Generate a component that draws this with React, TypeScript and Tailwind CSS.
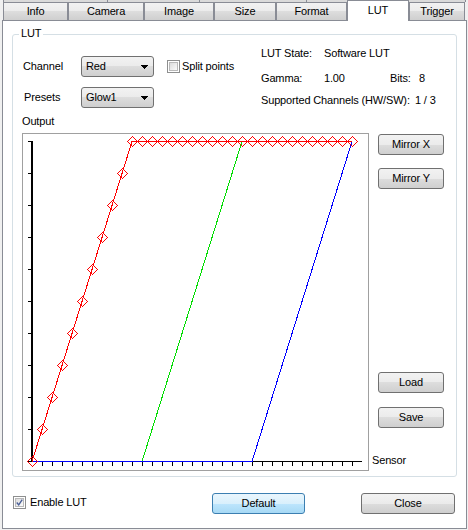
import React from 'react';

const tabs = [
  { label: 'Info', width: 'w-[65px]' },
  { label: 'Camera', width: 'w-[76px]' },
  { label: 'Image', width: 'w-[70px]' },
  { label: 'Size', width: 'w-[62px]' },
  { label: 'Format', width: 'w-[71px]' },
  { label: 'LUT', width: 'w-[62px]', active: true },
  { label: 'Trigger', width: 'w-[56px]' },
];

const btnFace =
  'border border-[#707070] rounded-[3px] bg-[linear-gradient(#f2f2f2,#ebebeb_50%,#dddddd_50%,#cfcfcf)]';

function WinButton({ label, width = 'w-[66px]', isDefault = false }: { label: string; width?: string; isDefault?: boolean }) {
  return (
    <button
      type="button"
      className={
        isDefault
          ? `${width} h-[21px] shrink-0 border border-[#3c7fb1] rounded-[3px] bg-[linear-gradient(#eaf6fd,#d9f0fc_50%,#bee6fd_50%,#a7d9f5)] text-black leading-[13px]`
          : `${width} h-[21px] shrink-0 ${btnFace} text-black leading-[13px]`
      }
    >
      {label}
    </button>
  );
}

function ComboBox({ value }: { value: string }) {
  return (
    <div className={`w-[73px] h-[21px] shrink-0 flex items-center justify-between pl-[4px] pr-[5px] ${btnFace}`}>
      <span className="leading-[13px]">{value}</span>
      <svg width="7" height="4" viewBox="0 0 7 4" shapeRendering="crispEdges">
        <polygon points="0,0 7,0 3.5,4" fill="#000" />
      </svg>
    </div>
  );
}

function CheckBox({ checked = false }: { checked?: boolean }) {
  return (
    <div className="w-[13px] h-[13px] shrink-0 border border-[#8e8f8f] bg-white p-px">
      <div className="w-full h-full border border-[#b9b9b9] bg-[linear-gradient(135deg,#dcdcdc,#fbfbfb)] flex items-center justify-center">
        {checked && (
          <svg width="9" height="9" viewBox="0 0 9 9">
            <path d="M1 4.5 L3.5 7.5 L8 0.8" fill="none" stroke="#4a5f97" strokeWidth="1.8" />
          </svg>
        )}
      </div>
    </div>
  );
}

function LutChart() {
  const yTicks = Array.from({ length: 11 }, (_, i) => 141 + i * 32);
  const xTicks = Array.from({ length: 32 }, (_, i) => 42 + i * 10);
  const points = Array.from({ length: 33 }, (_, i) => ({
    x: 32 + i * 10,
    y: i <= 10 ? 461 - i * 32 : 141,
  }));

  return (
    <svg width={345} height={336} viewBox="23 134 345 336" shapeRendering="crispEdges">
      {yTicks.map((y) => (
        <line key={y} x1={28} x2={32} y1={y + 0.5} y2={y + 0.5} stroke="#000" />
      ))}
      <line x1={32} x2={32} y1={141} y2={462} stroke="#000" strokeWidth={2} />
      <line x1={32} x2={362} y1={461.5} y2={461.5} stroke="#000" />
      {xTicks.map((x) => (
        <line key={x} x1={x + 0.5} x2={x + 0.5} y1={461} y2={466} stroke="#000" />
      ))}
      <polyline points="32,461.5 142,461.5 242,141.5 352,141.5" fill="none" stroke="#00dd00" />
      <polyline points="32,461.5 252,461.5 352,141.5" fill="none" stroke="#0000ff" />
      <polyline points="32,461.5 132,141.5 352,141.5" fill="none" stroke="#ff0000" />
      {points.map((p) => (
        <polygon
          key={p.x}
          points={`${p.x + 0.5},${p.y - 4.5} ${p.x + 5.5},${p.y + 0.5} ${p.x + 0.5},${p.y + 5.5} ${p.x - 4.5},${p.y + 0.5}`}
          fill="none"
          stroke="#ff0000"
        />
      ))}
    </svg>
  );
}

export default function App() {
  return (
    <div className="w-[468px] h-[530px] bg-[#f0f0f0] text-[11px] tracking-[-0.15px] text-black font-['Liberation_Sans',Arial,sans-serif] overflow-hidden">
      {/* tab header */}
      <div className="relative h-[20px]">
        <div className="absolute top-0 left-[3px] w-[463px] h-[2px] flex bg-[#dadada]">
          <div className="w-[104px] border-l border-[#898c95]" />
          <div className="w-[92px] border-l border-[#898c95]" />
          <div className="w-[107px] border-l border-[#898c95]" />
          <div className="flex-1 border-l border-r border-[#898c95]" />
        </div>
        <div className="relative flex items-end h-[20px] pl-[3px]">
          {tabs.map((t) =>
            t.active ? (
              <div
                key={t.label}
                className={`${t.width} h-[21px] -mb-px relative z-10 bg-white border-t border-l border-r border-[#898c95] text-center pt-[3px] leading-[13px]`}
              >
                {t.label}
              </div>
            ) : (
              <div
                key={t.label}
                className={`${t.width} h-[18px] border-t border-l border-r border-[#898c95] bg-[linear-gradient(#f2f2f2,#ebebeb_50%,#dddddd_50%,#cfcfcf)] flex items-center justify-center leading-[13px]`}
              >
                {t.label}
              </div>
            ),
          )}
        </div>
      </div>

      {/* tab page */}
      <div className="ml-[2px] w-[465px] h-[509px] border border-[#898c95] bg-white">
        <div className="relative ml-[9px] mt-[13px] w-[445px] h-[443px] border border-[#d5dfe5] rounded-[3px]">
          <span className="absolute left-[6px] top-[-8px] px-[2px] bg-white leading-[13px]">LUT</span>

          <div className="flex items-start">
            <div className="ml-[10px] mt-[21px] w-[238px]">
              <div className="flex items-center h-[21px]">
                <span className="w-[58px] leading-[13px]">Channel</span>
                <ComboBox value="Red" />
                <div className="ml-[13px]">
                  <CheckBox />
                </div>
                <span className="ml-[2px] leading-[13px]">Split points</span>
              </div>
              <div className="flex items-center h-[21px] mt-[10px]">
                <span className="w-[58px] pl-px leading-[13px]">Presets</span>
                <ComboBox value="Glow1" />
              </div>
            </div>

            <div className="mt-[12px] leading-[13px]">
              <div className="flex h-[13px]">
                <span className="w-[63px]">LUT State:</span>
                <span>Software LUT</span>
              </div>
              <div className="flex h-[13px] mt-[12px]">
                <span className="w-[63px]">Gamma:</span>
                <span className="w-[66px]">1.00</span>
                <span className="w-[29px]">Bits:</span>
                <span>8</span>
              </div>
              <div className="flex h-[13px] mt-[9px]">
                <span className="w-[154px]">Supported Channels (HW/SW):</span>
                <span>1 / 3</span>
              </div>
            </div>
          </div>

          <div className="ml-[9px] mt-[7px] h-[13px] leading-[13px]">Output</div>

          <div className="flex ml-[9px] mt-[5px]">
            <div className="w-[347px] h-[338px] border border-[#a0a0a0] bg-white">
              <LutChart />
            </div>
            <div className="flex flex-col h-[338px]">
              <div className="ml-[9px] mt-px">
                <WinButton label="Mirror X" />
              </div>
              <div className="ml-[9px] mt-[13px]">
                <WinButton label="Mirror Y" />
              </div>
              <div className="flex-1" />
              <div className="ml-[9px]">
                <WinButton label="Load" />
              </div>
              <div className="ml-[9px] mt-[14px]">
                <WinButton label="Save" />
              </div>
              <span className="ml-[3px] mt-[26px] mb-[4px] h-[13px] leading-[13px]">Sensor</span>
            </div>
          </div>
        </div>

        <div className="flex items-center h-[21px] mt-[16px] pl-[10px]">
          <div className="w-[199px] self-start mt-[3px] flex items-center h-[13px]">
            <CheckBox checked />
            <span className="ml-[4px] leading-[13px]">Enable LUT</span>
          </div>
          <WinButton label="Default" width="w-[93px]" isDefault />
          <div className="ml-[56px]">
            <WinButton label="Close" width="w-[94px]" />
          </div>
        </div>
      </div>
    </div>
  );
}
